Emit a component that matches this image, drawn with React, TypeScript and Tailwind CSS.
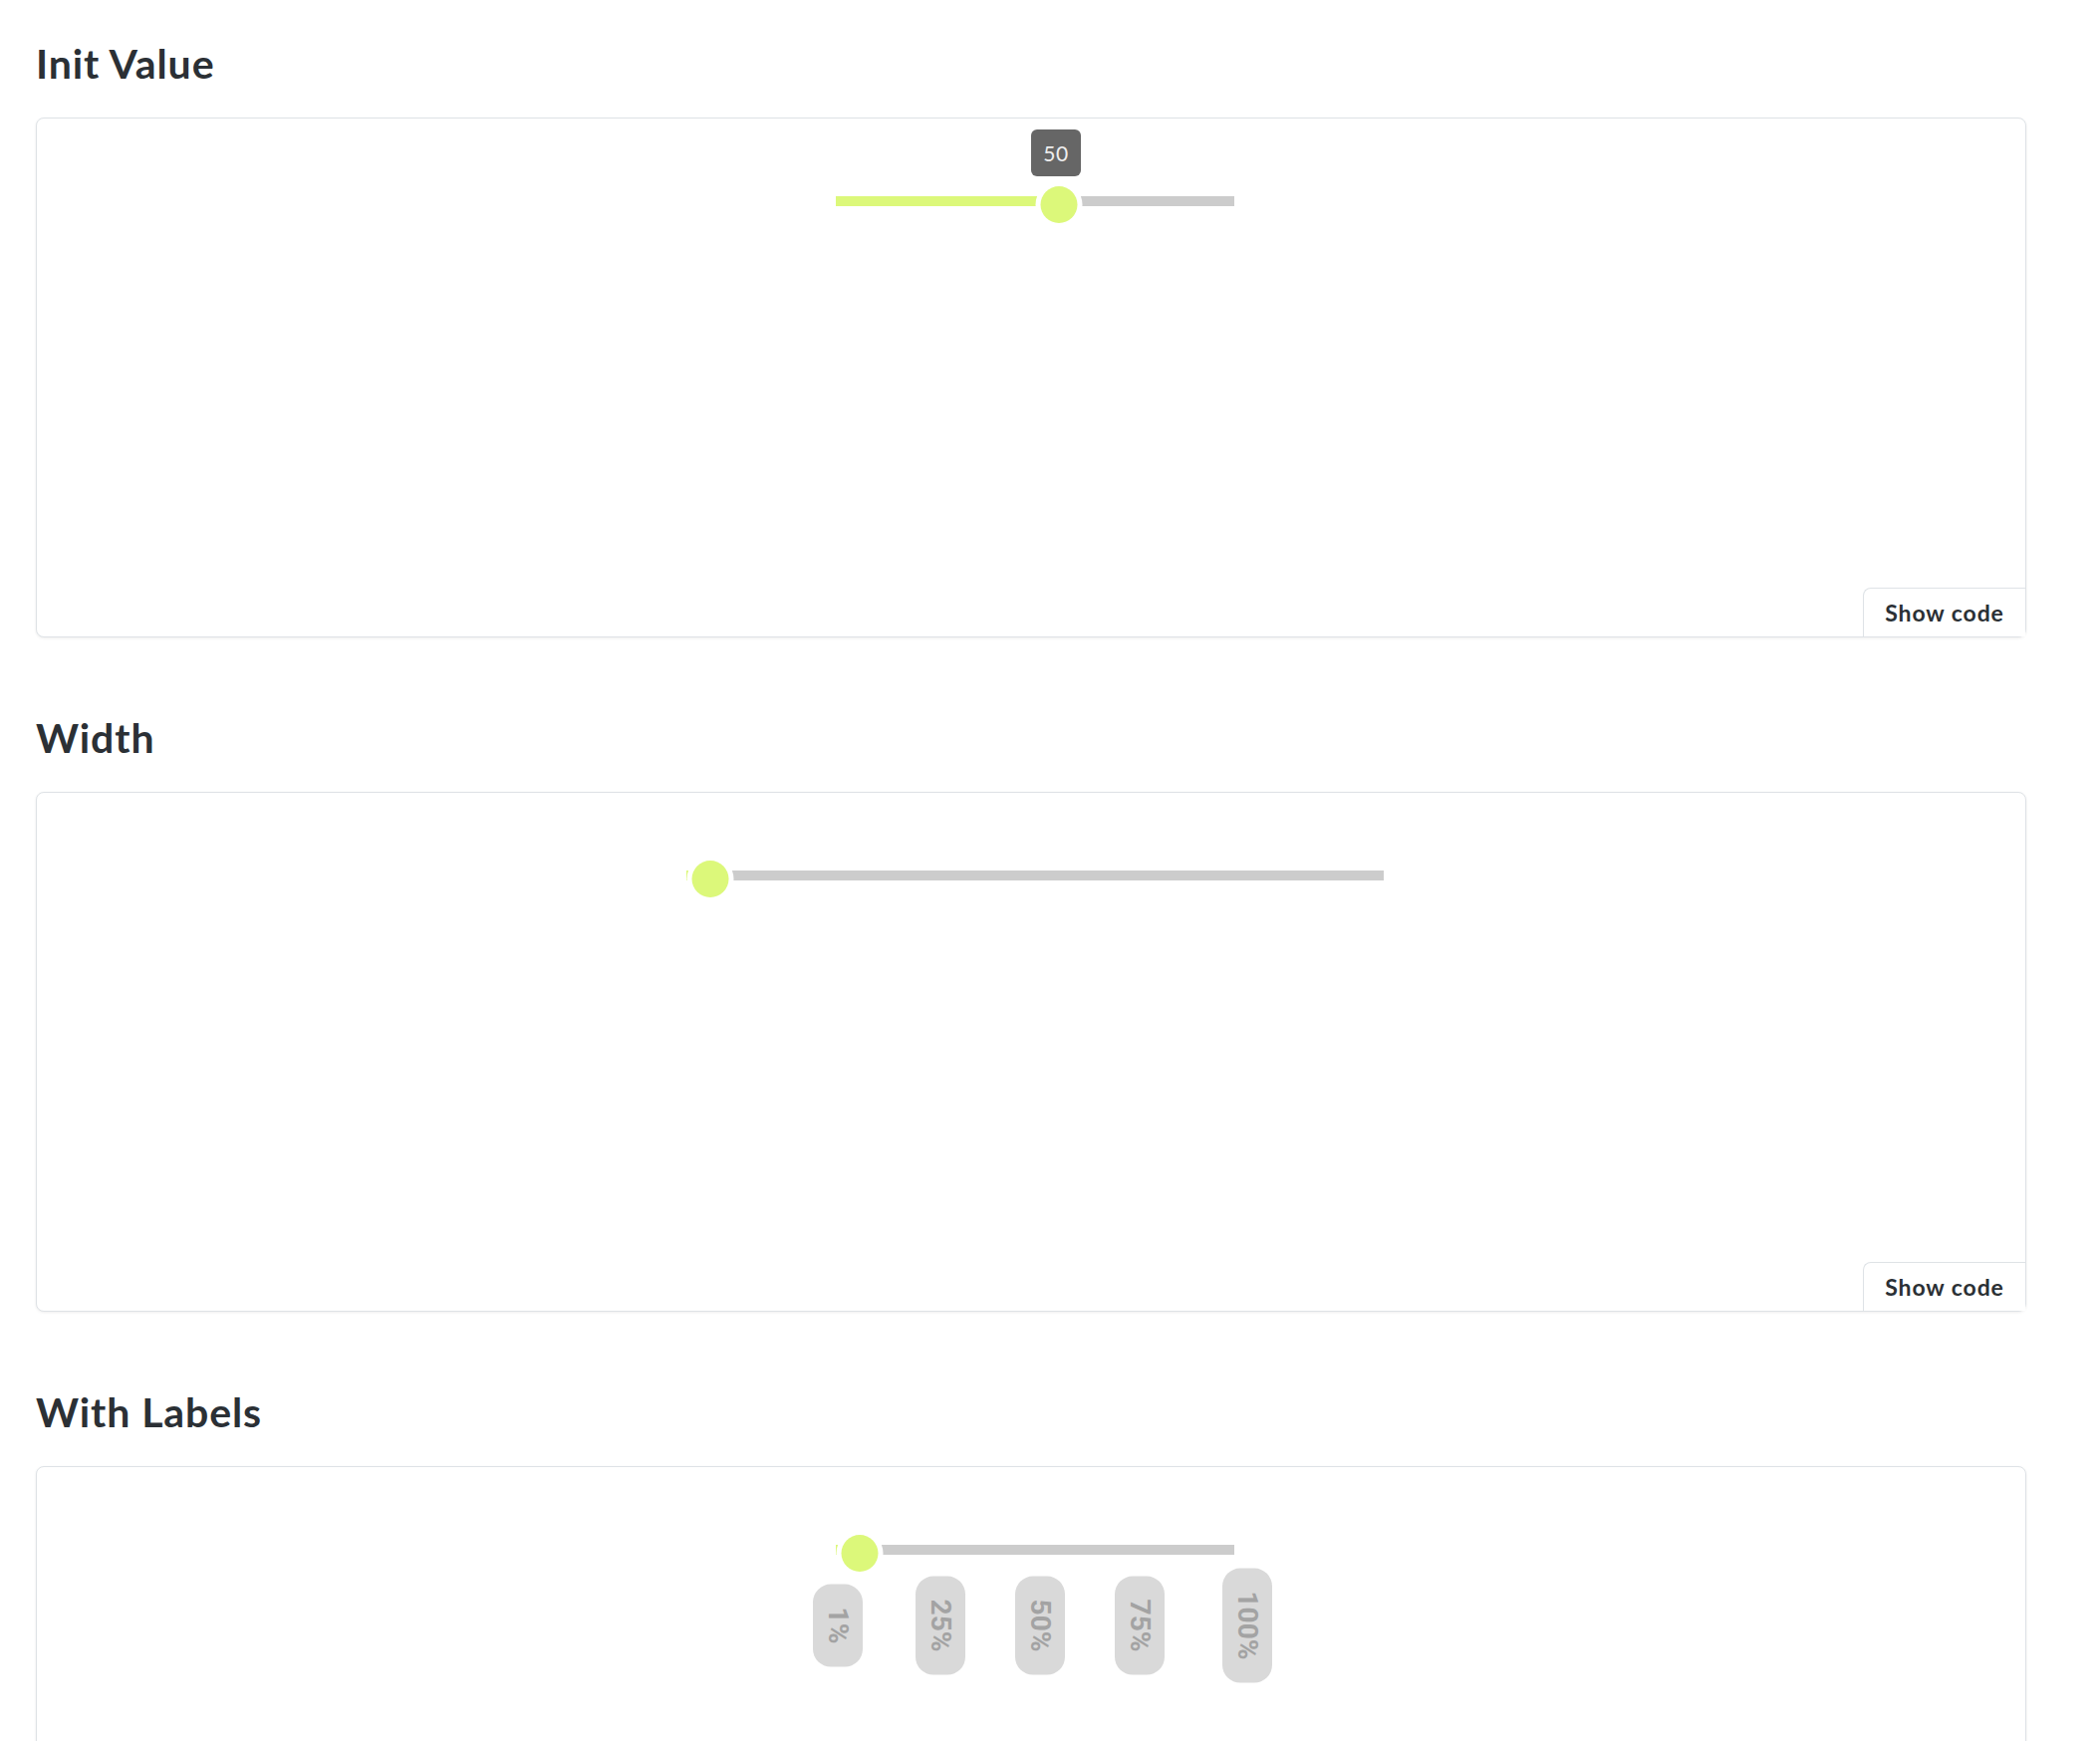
import React from "react";

type Label = { text: string; x: number };

function Slider({
  width,
  value,
  tooltip,
  labels,
}: {
  width: number;
  value: number;
  tooltip?: string;
  labels?: Label[];
}) {
  const pos = `calc(${value * 100}% + 24px)`;
  return (
    <div className="relative h-[10px] bg-[#cccccc]" style={{ width }}>
      <div className="absolute left-0 top-0 h-full bg-[#dcf87a]" style={{ width: pos }} />
      <div
        className="absolute top-[-10px] h-[37px] w-[37px] -translate-x-1/2 rounded-full bg-[#dcf87a] shadow-[0_0_0_5px_#ffffff]"
        style={{ left: pos }}
      />
      {tooltip && (
        <div
          className="absolute top-[-67px] flex h-[47px] w-[50px] -translate-x-1/2 items-center justify-center rounded-[6px] bg-[#666666] text-[21px] tracking-[0.5px] text-[#eeeeee] [font-family:Lato,'Noto_Sans',sans-serif]"
          style={{ left: `calc(${value * 100}% + 21px)` }}
        >
          {tooltip}
        </div>
      )}
      {labels &&
        labels.map((l) => (
          <div
            key={l.text}
            className="absolute top-[81px] flex h-[50px] -translate-x-1/2 -translate-y-1/2 rotate-90 items-center justify-center whitespace-nowrap rounded-[18px] bg-[#d9d9d9] px-[23px] text-[28px] font-bold text-[#a3a3a3] [font-family:Roboto,'Liberation_Sans',sans-serif]"
            style={{ left: l.x }}
          >
            {l.text}
          </div>
        ))}
    </div>
  );
}

function Section({ title, children }: { title: string; children: React.ReactNode }) {
  return (
    <section className="mb-[77px]">
      <h2 className="text-[41px] font-bold leading-[48px] tracking-[0.9px] text-[#2b3035]">{title}</h2>
      <div className="mt-[30px] flex h-[522px] w-[1998px] flex-col rounded-lg border border-[#dee2e6] bg-white shadow-[0_1px_3px_rgba(0,0,0,0.07)]">
        <div className="flex justify-center pl-[8px] pt-[78px]">{children}</div>
        <button className="mt-auto flex h-[49px] w-[163px] items-center justify-center self-end rounded-tl-lg border-l border-t border-[#dee2e6] bg-white text-[23px] font-bold tracking-[0.9px] text-[#2b3035]">
          Show code
        </button>
      </div>
    </section>
  );
}

export default function App() {
  return (
    <div className="min-h-screen bg-white pl-[36px] pt-[40px] [font-family:Lato,'Noto_Sans',sans-serif]">
      <Section title="Init Value">
        <Slider width={400} value={0.5} tooltip="50" />
      </Section>
      <Section title="Width">
        <Slider width={700} value={0} />
      </Section>
      <Section title="With Labels">
        <Slider
          width={400}
          value={0}
          labels={[
            { text: "1%", x: 2 },
            { text: "25%", x: 105 },
            { text: "50%", x: 205 },
            { text: "75%", x: 305 },
            { text: "100%", x: 413 },
          ]}
        />
      </Section>
    </div>
  );
}
